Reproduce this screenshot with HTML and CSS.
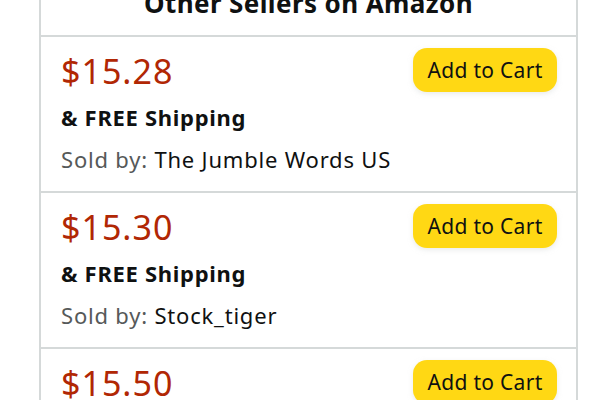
FILE: index.html
```html
<!DOCTYPE html>
<html>
<head>
    <meta charset="utf-8">
    <link rel="stylesheet" href="styles.css">
    <title>Other Sellers on Amazon</title>
</head>
<body>
    <div class="sellers">
        <h2 class="sellers-title">Other Sellers on Amazon</h2>

        <div class="offer">
            <div class="offer-info">
                <div class="offer-price">$15.28</div>
                <div class="offer-shipping">&amp; FREE Shipping</div>
                <div class="offer-seller"><span class="label">Sold by:</span> The Jumble Words US</div>
            </div>
            <button class="add-btn">Add to Cart</button>
        </div>

        <div class="offer">
            <div class="offer-info">
                <div class="offer-price">$15.30</div>
                <div class="offer-shipping">&amp; FREE Shipping</div>
                <div class="offer-seller"><span class="label">Sold by:</span> Stock_tiger</div>
            </div>
            <button class="add-btn">Add to Cart</button>
        </div>

        <div class="offer">
            <div class="offer-info">
                <div class="offer-price">$15.50</div>
                <div class="offer-shipping">&amp; FREE Shipping</div>
                <div class="offer-seller"><span class="label">Sold by:</span> BookDepot</div>
            </div>
            <button class="add-btn">Add to Cart</button>
        </div>
    </div>
</body>
</html>
```

FILE: styles.css
```css
body{
    margin: 0;
    background: #ffffff;
    font-family: "Noto Sans", "Liberation Sans", sans-serif;
    color: #0f1111;
    overflow: hidden;
}

.sellers{
    width: 535px;
    margin: -15px 0 0 39px;
    border: 2px solid #d5d9d9;
    border-top: none;
}

.sellers-title{
    margin: 0;
    height: 50px;
    line-height: 36px;
    font-size: 26px;
    letter-spacing: 0.4px;
    font-weight: bold;
    text-align: center;
    border-bottom: 2px solid #d5d9d9;
}

.offer{
    display: flex;
    justify-content: space-between;
    align-items: flex-start;
    padding: 11px 20px 17px 20px;
    border-bottom: 2px solid #d5d9d9;
}

.offer-price{
    margin-top: 1px;
    font-size: 34px;
    line-height: 44px;
    letter-spacing: 1px;
    color: #b12704;
}

.offer-shipping{
    margin-top: 9px;
    font-size: 22px;
    line-height: 30px;
    letter-spacing: 0.7px;
    font-weight: bold;
}

.offer-seller{
    margin-top: 12px;
    font-size: 22px;
    line-height: 30px;
    letter-spacing: 0.8px;
}

.offer-seller .label{
    color: #565959;
}

.add-btn{
    width: 144px;
    height: 44px;
    margin-right: -1px;
    padding: 0;
    background-color: #ffd814;
    border: none;
    border-radius: 14px;
    box-shadow: 0 2px 5px rgba(213, 217, 217, 0.5);
    font-family: inherit;
    font-size: 21px;
    letter-spacing: 0.3px;
    color: #0f1111;
    cursor: pointer;
}
```
